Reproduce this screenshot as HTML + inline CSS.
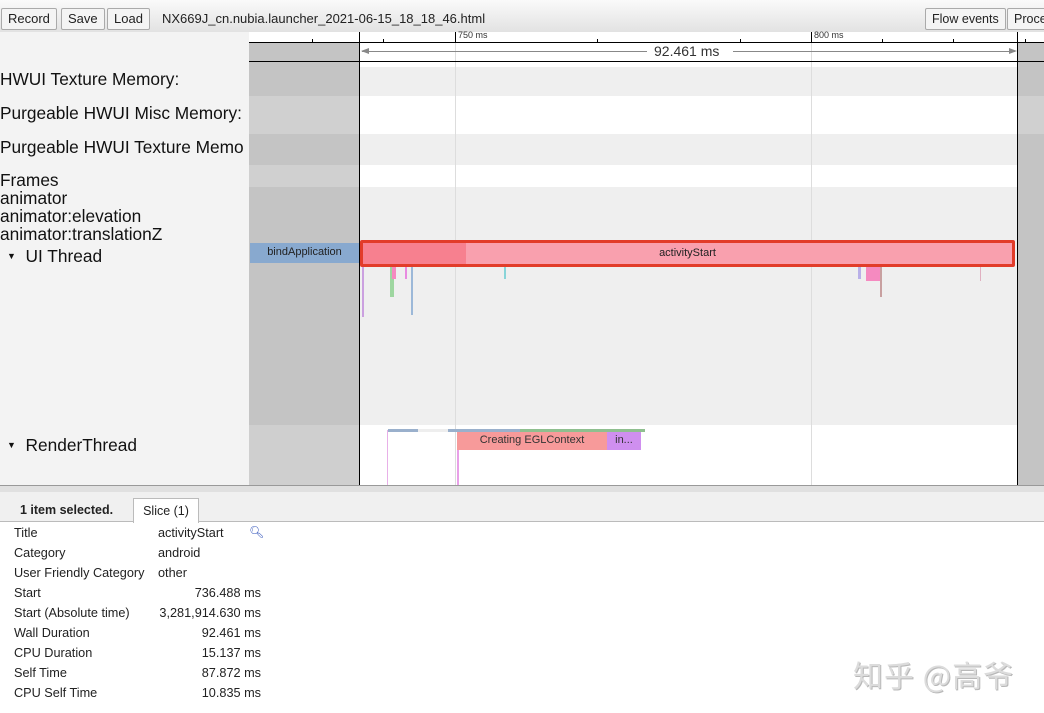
<!DOCTYPE html>
<html><head><meta charset="utf-8"><style>
*{margin:0;padding:0;box-sizing:border-box}
body{width:1044px;height:713px;overflow:hidden;background:#fff;font-family:"Liberation Sans","Noto Sans CJK SC",sans-serif;position:relative}
.a{position:absolute}
.btn{position:absolute;top:8px;height:22px;border:1px solid #aaa;background:#f4f4f4;font-size:13px;line-height:20px;padding:0 6px;color:#222;border-radius:2px}
.lbl{position:absolute;left:0;font-size:17.3px;color:#111}
.row{position:absolute;font-size:12.7px;color:#222}
.k{left:14px}.v{left:158px}.r{width:110px;left:151px;text-align:right}
</style></head><body>
<div class="a" style="left:0;top:0;width:1044px;height:32px;background:linear-gradient(#fafafa,#e2e2e2)"></div>
<div class="btn" style="left:1px">Record</div>
<div class="btn" style="left:61px">Save</div>
<div class="btn" style="left:107px">Load</div>
<div class="a" style="left:162px;top:11px;font-size:13px;color:#222">NX669J_cn.nubia.launcher_2021-06-15_18_18_46.html</div>
<div class="btn" style="left:925px;font-size:12.5px">Flow events</div>
<div class="btn" style="left:1007px;width:50px;font-size:12.5px">Proce</div>

<div class="a" style="left:0;top:32px;width:249px;height:453px;background:#f3f3f3"></div>
<div class="lbl" style="top:69px">HWUI Texture Memory:</div>
<div class="lbl" style="top:103px">Purgeable HWUI Misc Memory:</div>
<div class="lbl" style="top:137px">Purgeable HWUI Texture Memo</div>
<div class="lbl" style="top:171px;line-height:18px">Frames<br>animator<br>animator:elevation<br>animator:translationZ</div>
<div class="lbl" style="top:246px;left:7px"><span style="font-size:9px;vertical-align:3px">▼</span>&nbsp; UI Thread</div>
<div class="lbl" style="top:435px;left:7px"><span style="font-size:9px;vertical-align:3px">▼</span>&nbsp; RenderThread</div>

<div class="a" style="left:249px;top:32px;width:795px;height:453px;background:#efefef"></div>
<div class="a" style="left:249px;top:32px;width:795px;height:30px;background:#fff"></div>
<div class="a" style="left:360px;top:96px;width:658px;height:38px;background:#fff"></div>
<div class="a" style="left:360px;top:165px;width:658px;height:22px;background:#fff"></div>
<div class="a" style="left:360px;top:425px;width:658px;height:60px;background:#fff"></div>
<div class="a" style="left:360px;top:62px;width:658px;height:5px;background:#fff"></div>
<div class="a" style="left:249px;top:43px;width:111px;height:442px;background:#c4c4c4"></div>
<div class="a" style="left:249px;top:96px;width:111px;height:38px;background:#d0d0d0"></div>
<div class="a" style="left:249px;top:165px;width:111px;height:22px;background:#d0d0d0"></div>
<div class="a" style="left:249px;top:425px;width:111px;height:60px;background:#cfcfcf"></div>
<div class="a" style="left:1018px;top:43px;width:26px;height:442px;background:#c4c4c4"></div>
<div class="a" style="left:1018px;top:96px;width:26px;height:38px;background:#d0d0d0"></div>
<div class="a" style="left:359px;top:32px;width:1px;height:453px;background:#000"></div>
<div class="a" style="left:1017px;top:32px;width:1px;height:453px;background:#000"></div>
<div class="a" style="left:455px;top:43px;width:1px;height:442px;background:#ddd"></div>
<div class="a" style="left:811px;top:43px;width:1px;height:442px;background:#ddd"></div>
<div class="a" style="left:249px;top:42px;width:795px;height:1px;background:#000"></div>
<div class="a" style="left:249px;top:61px;width:795px;height:1px;background:#000"></div>
<div class="a" style="left:455px;top:32px;width:1px;height:10px;background:#000"></div>
<div class="a" style="left:811px;top:32px;width:1px;height:10px;background:#000"></div>
<div class="a" style="left:312px;top:39px;width:1px;height:3px;background:#000"></div>
<div class="a" style="left:383px;top:39px;width:1px;height:3px;background:#000"></div>
<div class="a" style="left:597px;top:39px;width:1px;height:3px;background:#000"></div>
<div class="a" style="left:740px;top:39px;width:1px;height:3px;background:#000"></div>
<div class="a" style="left:882px;top:39px;width:1px;height:3px;background:#000"></div>
<div class="a" style="left:953px;top:39px;width:1px;height:3px;background:#000"></div>
<div class="a" style="left:1025px;top:39px;width:1px;height:3px;background:#000"></div>
<div class="a" style="left:458px;top:30px;font-size:9px;color:#333">750 ms</div>
<div class="a" style="left:814px;top:30px;font-size:9px;color:#333">800 ms</div>
<div class="a" style="left:362px;top:51px;width:285px;height:1px;background:#888"></div>
<div class="a" style="left:733px;top:51px;width:282px;height:1px;background:#888"></div>
<div class="a" style="left:361px;top:48px;width:0;height:0;border-top:3px solid transparent;border-bottom:3px solid transparent;border-right:8px solid #888"></div>
<div class="a" style="left:1009px;top:48px;width:0;height:0;border-top:3px solid transparent;border-bottom:3px solid transparent;border-left:8px solid #888"></div>
<div class="a" style="left:654px;top:43px;font-size:14px;color:#333">92.461 ms</div>

<div class="a" style="left:250px;top:243px;width:109px;height:20px;background:#88a9cf;font-size:11px;color:#222;text-align:center;line-height:18px">bindApplication</div>
<div class="a" style="left:362px;top:241px;width:650px;height:24px;background:#f9a0ae"></div>
<div class="a" style="left:362px;top:241px;width:104px;height:24px;background:#f7808f"></div>
<div class="a" style="left:360px;top:240px;width:655px;height:27px;border:3px solid #e23c2a;border-radius:2px;font-size:11px;color:#222;text-align:center;line-height:21px">activityStart</div>
<div class="a" style="left:866px;top:267px;width:16px;height:14px;background:#f58ac0"></div>
<div class="a" style="left:858px;top:267px;width:3px;height:12px;background:#b9b0e8"></div>
<div class="a" style="left:390px;top:267px;width:4px;height:30px;background:#9ed6a0"></div>
<div class="a" style="left:392px;top:267px;width:4px;height:12px;background:#f58ac0"></div>
<div class="a" style="left:362px;top:267px;width:2px;height:50px;background:#cba0e0"></div>
<div class="a" style="left:411px;top:267px;width:2px;height:48px;background:#9cb8d8"></div>
<div class="a" style="left:405px;top:267px;width:2px;height:12px;background:#e88ae0"></div>
<div class="a" style="left:504px;top:267px;width:2px;height:12px;background:#88d4d8"></div>
<div class="a" style="left:880px;top:267px;width:2px;height:30px;background:#c8a0a0"></div>
<div class="a" style="left:980px;top:267px;width:1px;height:14px;background:#e0b0c0"></div>

<div class="a" style="left:388px;top:429px;width:255px;height:3px;background:#9ab0cc"></div>
<div class="a" style="left:418px;top:429px;width:30px;height:3px;background:#eee"></div>
<div class="a" style="left:520px;top:429px;width:125px;height:3px;background:#8fbf8f"></div>
<div class="a" style="left:457px;top:432px;width:150px;height:18px;background:#f79a9a;font-size:11px;color:#333;text-align:center;line-height:16px">Creating EGLContext</div>
<div class="a" style="left:607px;top:432px;width:34px;height:18px;background:#cf8fef;font-size:11px;color:#333;text-align:center;line-height:16px">in...</div>
<div class="a" style="left:387px;top:430px;width:1px;height:55px;background:#e8b0e8"></div>
<div class="a" style="left:457px;top:450px;width:2px;height:35px;background:#e8a0e8"></div>

<div class="a" style="left:0;top:485px;width:1044px;height:7px;background:#e0e0e0;border-top:1px solid #999"></div>
<div class="a" style="left:0;top:492px;width:1044px;height:30px;background:#f0f0f0;border-bottom:1px solid #bbb"></div>
<div class="a" style="left:20px;top:503px;font-size:12.5px;font-weight:bold;color:#222">1 item selected.</div>
<div class="a" style="left:133px;top:498px;width:66px;height:25px;background:#fff;border:1px solid #bbb;border-bottom:none;font-size:12.5px;color:#222;text-align:center;line-height:24px">Slice (1)</div>
<div class="row k" style="top:526px">Title</div><div class="row v" style="top:526px">activityStart</div>
<div class="row" style="left:249px;top:525px;color:#3355bb;font-size:12px">&#x1F50D;&#xFE0E;</div>
<div class="row k" style="top:546px">Category</div><div class="row v" style="top:546px">android</div>
<div class="row k" style="top:566px">User Friendly Category</div><div class="row v" style="top:566px">other</div>
<div class="row k" style="top:586px">Start</div><div class="row r" style="top:586px">736.488 ms</div>
<div class="row k" style="top:606px">Start (Absolute time)</div><div class="row r" style="top:606px;left:131px;width:130px">3,281,914.630 ms</div>
<div class="row k" style="top:626px">Wall Duration</div><div class="row r" style="top:626px">92.461 ms</div>
<div class="row k" style="top:646px">CPU Duration</div><div class="row r" style="top:646px">15.137 ms</div>
<div class="row k" style="top:666px">Self Time</div><div class="row r" style="top:666px">87.872 ms</div>
<div class="row k" style="top:686px">CPU Self Time</div><div class="row r" style="top:686px">10.835 ms</div>
<div class="a" style="left:853px;top:652px;font-size:30px;color:#dcdcdc;font-family:'Noto Sans CJK SC',sans-serif;text-shadow:1px 1px 0 #b8b8b8;letter-spacing:1px;white-space:nowrap">知乎 @高爷</div>
</body></html>
